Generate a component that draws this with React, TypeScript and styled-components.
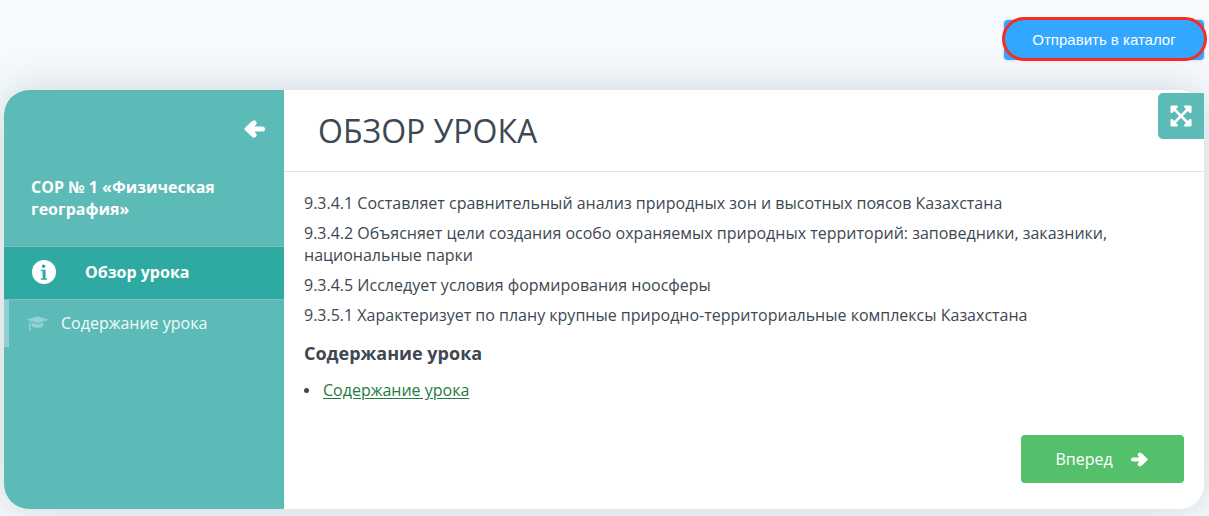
import React from 'react';
import styled, { createGlobalStyle } from 'styled-components';
import { FaExpandArrowsAlt } from 'react-icons/fa';

const GlobalStyle = createGlobalStyle`
  * { box-sizing: border-box; }
  body {
    margin: 0;
    background: #f6fafd;
    color: #3d4852;
    font: 16px/22px 'Open Sans', 'Noto Sans', sans-serif;
  }
  button { border: 0; padding: 0; font: inherit; color: #fff; cursor: pointer; }
  h1, h2, p, ul { margin: 0; padding: 0; }
`;

const Page = styled.div`
  padding: 20px 5px 7px 4px;
  overflow: hidden;
`;

const Toolbar = styled.div`
  display: flex;
  justify-content: flex-end;
  margin-bottom: 30px;
`;

const PublishButton = styled.button`
  position: relative;
  width: 200px;
  height: 40px;
  border-radius: 4px;
  background: #33a6ff;
  box-shadow: 0 0 3px rgba(60, 80, 110, 0.3);
  font: 15px/20px 'Liberation Sans', Arial, sans-serif;

  &::after {
    content: '';
    position: absolute;
    inset: -3px -3px -1px -2px;
    border: 3px solid #f92c20;
    border-radius: 22px;
  }
`;

const Lesson = styled.section`
  position: relative;
  border-radius: 25px;
  box-shadow: 0 0 40px rgba(70, 80, 90, 0.22);
`;

const Card = styled.div`
  display: flex;
  border-radius: 25px;
  overflow: hidden;
  background: #fff;
`;

const Sidebar = styled.aside`
  flex: 0 0 280px;
  background: #5cbbb6;
  color: #fff;
`;

const SidebarTop = styled.div`
  display: flex;
  justify-content: flex-end;
  padding: 30px 19px 0 0;
`;

const CollapseButton = styled.button`
  display: flex;
  background: none;
`;

const CourseTitle = styled.h2`
  padding: 38px 27px 26px;
  font-size: 16px;
  line-height: 22px;
  font-weight: 700;
`;

const OverviewLink = styled.a`
  display: flex;
  align-items: center;
  gap: 29px;
  height: 54px;
  padding: 0 28px 2px;
  border: solid #7dbfc0;
  border-width: 1px 0;
  background: #2faaa3;
  color: #fff;
  font-weight: 700;
  text-decoration: none;
`;

const SectionLink = styled.a`
  display: flex;
  align-items: center;
  gap: 13px;
  height: 47px;
  padding: 0 18px 2px;
  border-left: 5px solid #90d1d6;
  color: #f1fbfb;
  text-decoration: none;

  svg { color: #90d1d6; }
`;

const Main = styled.main`
  flex: 1;
  min-width: 0;
`;

const Header = styled.header`
  padding: 19px 34px 18px;
  border-bottom: 1px solid #e2e4e6;
`;

const PageTitle = styled.h1`
  font-size: 32px;
  line-height: 44px;
  font-weight: 400;
`;

const ExpandButton = styled.button`
  position: absolute;
  top: 3px;
  right: 0;
  display: flex;
  align-items: center;
  justify-content: center;
  width: 46px;
  height: 46px;
  border-radius: 5px 0 0 5px;
  background: #5cbbb6;
`;

const Content = styled.div`
  display: flex;
  flex-direction: column;
  gap: 8px;
  padding: 20px 20px 34px;
`;

const Subtitle = styled.h2`
  padding: 8px 0 7px;
  font-size: 18px;
  line-height: 22px;
  font-weight: 700;
`;

const LessonList = styled.ul`
  list-style: none;
`;

const LessonItem = styled.li`
  display: flex;
  align-items: center;
  gap: 14px;

  &::before {
    content: '';
    width: 5px;
    height: 5px;
    border-radius: 50%;
    background: #3d4852;
  }
  a { color: #1f7a40; text-underline-offset: 2px; }
`;

const Footer = styled.footer`
  display: flex;
  justify-content: flex-end;
  padding: 0 20px 26px;
`;

const NextButton = styled.button`
  display: flex;
  align-items: center;
  justify-content: center;
  gap: 18px;
  width: 163px;
  height: 48px;
  padding-right: 2px;
  border-radius: 4px;
  background: #55c06c;
`;

const goals = [
  '9.3.4.1 Составляет сравнительный анализ природных зон и высотных поясов Казахстана',
  '9.3.4.2 Объясняет цели создания особо охраняемых природных территорий: заповедники, заказники, национальные парки',
  '9.3.4.5 Исследует условия формирования ноосферы',
  '9.3.5.1 Характеризует по плану крупные природно-территориальные комплексы Казахстана',
];

function Arrow({ width, back }: { width: number; back?: boolean }) {
  return (
    <svg width={width} height={Math.round(width * 0.86)} viewBox="0 0 21 18" aria-hidden="true">
      <g transform={back ? undefined : 'matrix(-1 0 0 1 21 0)'}>
        <path d="M4 9H18.4M10 3L4 9L10 15" fill="none" stroke="#fff" strokeWidth="5.2" strokeLinecap="round" strokeLinejoin="round" />
        <path d="M0 9L7.5 1.5L11 6V12L7.5 16.5Z" fill="#fff" />
      </g>
    </svg>
  );
}

function InfoIcon() {
  return (
    <svg width="24" height="24" viewBox="0 0 24 24" aria-hidden="true">
      <circle cx="12" cy="12" r="12" fill="#fff" />
      <circle cx="11.6" cy="6.2" r="1.8" fill="#2faaa3" />
      <path d="M8.8 9.7H13.6V18.2L15 18.6V19.7H8.8V18.6L10.6 18.2V11.2L8.8 10.8Z" fill="#2faaa3" />
    </svg>
  );
}

function GraduationCapIcon() {
  return (
    <svg width="21" height="16" viewBox="0 0 2304 1755" fill="currentColor" aria-hidden="true">
      <path d="M1774 836l18 316q4 69-82 128t-235 93.500-323 34.500-323-34.500-235-93.500-82-128l18-316 574 181q22 7 48 7t48-7zM2304 512q0 23-22 31l-1120 352q-4 1-10 1t-10-1l-652-206q-43 34-71 111.500t-34 178.500q63 36 63 109 0 69-58 107l58 433q2 14-8 25-9 11-24 11h-192q-15 0-24-11-10-11-8-25l58-433q-58-38-58-107 0-73 65-111 11-207 98-330l-333-104q-22-8-22-31t22-31l1120-352q4-1 10-1t10 1l1120 352q22 8 22 31z" />
    </svg>
  );
}

export default function App() {
  return (
    <Page>
      <GlobalStyle />
      <Toolbar>
        <PublishButton type="button">Отправить в каталог</PublishButton>
      </Toolbar>
      <Lesson>
        <Card>
          <Sidebar>
            <SidebarTop>
              <CollapseButton type="button" aria-label="Свернуть меню">
                <Arrow width={21} back />
              </CollapseButton>
            </SidebarTop>
            <CourseTitle>СОР № 1 «Физическая география»</CourseTitle>
            <nav>
              <OverviewLink href="#overview" aria-current="page">
                <InfoIcon />
                Обзор урока
              </OverviewLink>
              <SectionLink href="#content">
                <GraduationCapIcon />
                Содержание урока
              </SectionLink>
            </nav>
          </Sidebar>
          <Main>
            <Header>
              <PageTitle>ОБЗОР УРОКА</PageTitle>
            </Header>
            <Content>
              {goals.map((goal) => (
                <p key={goal}>{goal}</p>
              ))}
              <Subtitle>Содержание урока</Subtitle>
              <LessonList>
                <LessonItem>
                  <a href="#content">Содержание урока</a>
                </LessonItem>
              </LessonList>
            </Content>
            <Footer>
              <NextButton type="button">
                Вперед
                <Arrow width={17} />
              </NextButton>
            </Footer>
          </Main>
        </Card>
        <ExpandButton type="button" aria-label="На весь экран">
          <FaExpandArrowsAlt size={24} />
        </ExpandButton>
      </Lesson>
    </Page>
  );
}
